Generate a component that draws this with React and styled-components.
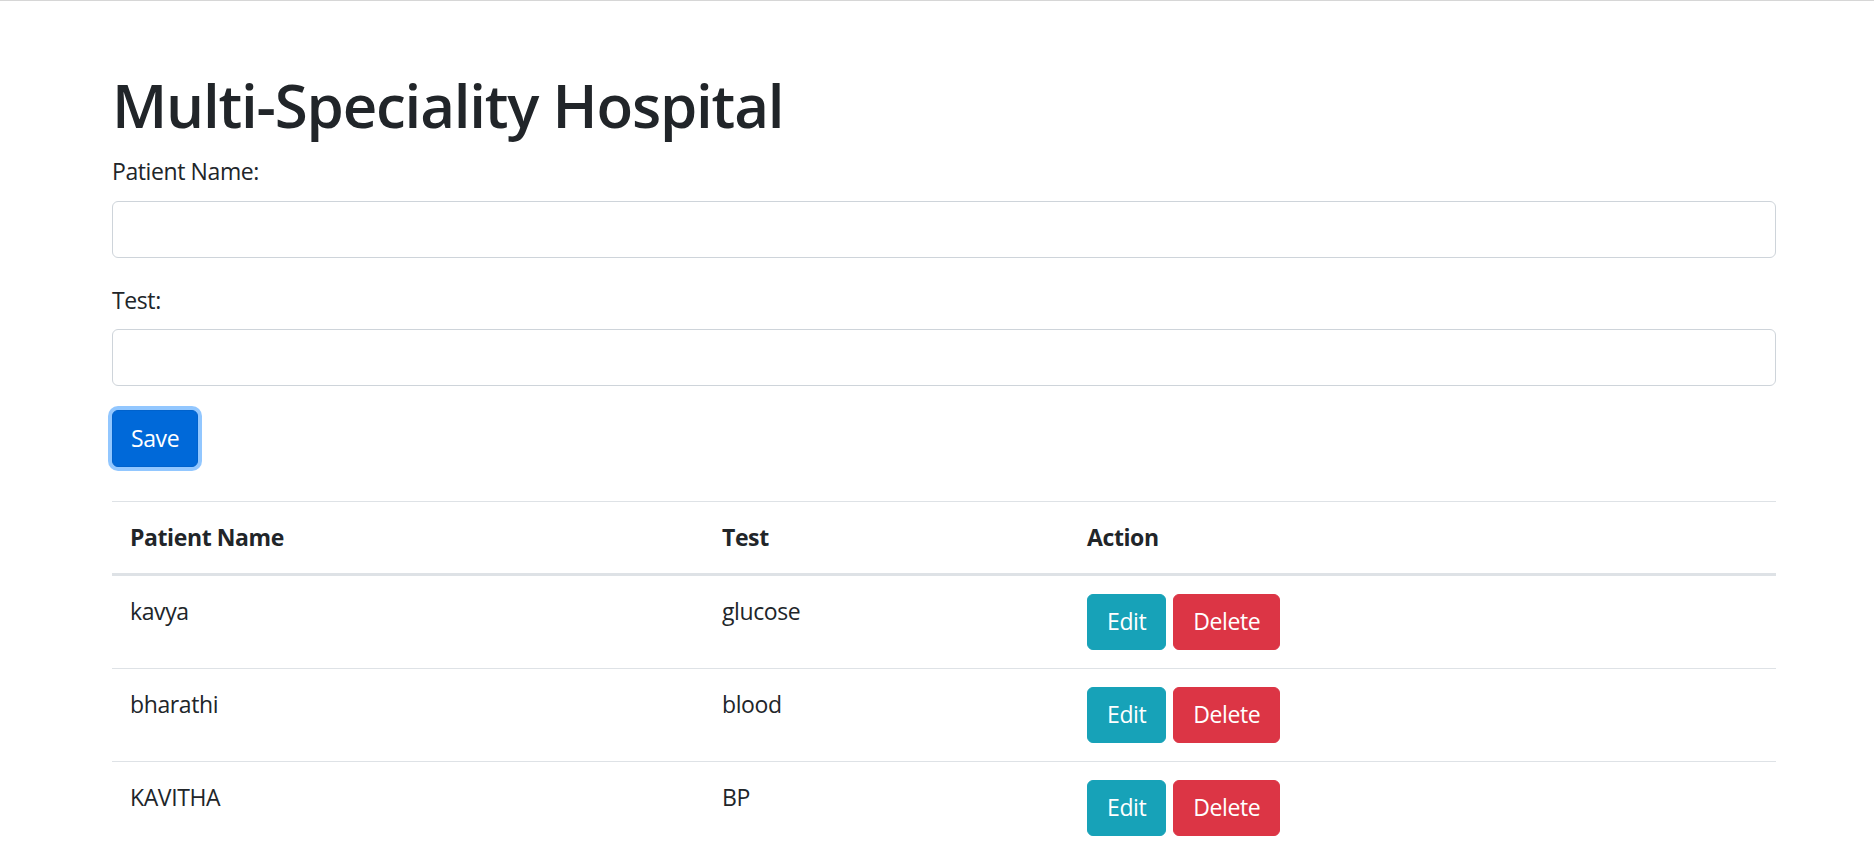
import React, { useState } from 'react';
import styled, { createGlobalStyle } from 'styled-components';

const GlobalStyle = createGlobalStyle`
  * { box-sizing: border-box; }
  html, body {
    margin: 0;
    padding: 0;
    background: #ffffff;
  }
  body {
    border-top: 1px solid #d6d6d6;
    font-family: "Open Sans", "Noto Sans", "Liberation Sans", sans-serif;
    font-size: 24px;
    line-height: 1.5;
    color: #212529;
  }
`;

const Page = styled.div`
  padding: 68px 98px 40px 112px;
`;

const Title = styled.h1`
  margin: 0 0 12px;
  font-size: 60px;
  font-weight: 600;
  line-height: 1.2;
  letter-spacing: -1.2px;
  color: #212529;
`;

const FormGroup = styled.div`
  margin-bottom: 24px;
`;

const Label = styled.label`
  display: inline-block;
  margin-bottom: 12px;
  font-size: 23px;
  letter-spacing: -0.4px;
`;

const Input = styled.input`
  display: block;
  width: 100%;
  height: 57px;
  padding: 9px 18px;
  font: inherit;
  color: #495057;
  background: #fff;
  border: 1.5px solid #ced4da;
  border-radius: 6px;
  outline: none;
`;

const SaveButton = styled.button`
  display: inline-block;
  height: 57px;
  padding: 0 18px;
  font: inherit;
  font-size: 23px;
  letter-spacing: -0.4px;
  color: #fff;
  background: #0069d9;
  border: 1.5px solid #0062cc;
  border-radius: 6px;
  box-shadow: 0 0 0 4px rgba(38, 143, 255, 0.5);
  cursor: pointer;
`;

const Table = styled.table`
  width: 100%;
  margin-top: 34px;
  border-collapse: collapse;
  color: #212529;
`;

const Th = styled.th`
  width: ${({ $width }) => $width || 'auto'};
  padding: 18px;
  text-align: left;
  vertical-align: bottom;
  font-weight: 700;
  font-size: 23px;
  letter-spacing: -0.4px;
  border-top: 1.5px solid #dee2e6;
  border-bottom: 3px solid #dee2e6;
`;

const Td = styled.td`
  padding: 18px;
  vertical-align: top;
  font-size: 23px;
  letter-spacing: -0.4px;
  border-top: 1.5px solid #dee2e6;
`;

const ActionButton = styled.button`
  height: 56px;
  padding: 0 19px;
  margin-right: 7px;
  font: inherit;
  font-size: 23px;
  letter-spacing: -0.4px;
  color: #fff;
  background: ${({ $variant }) => ($variant === 'danger' ? '#dc3545' : '#17a2b8')};
  border: 1.5px solid ${({ $variant }) => ($variant === 'danger' ? '#dc3545' : '#17a2b8')};
  border-radius: 6px;
  vertical-align: top;
  cursor: pointer;
`;

const initialPatients = [
  { id: 1, name: 'kavya', test: 'glucose' },
  { id: 2, name: 'bharathi', test: 'blood' },
  { id: 3, name: 'KAVITHA', test: 'BP' },
];

export default function App() {
  const [patients] = useState(initialPatients);
  const [name, setName] = useState('');
  const [test, setTest] = useState('');

  return (
    <Page>
      <GlobalStyle />
      <Title>Multi-Speciality Hospital</Title>

      <FormGroup>
        <Label htmlFor="patient-name">Patient Name:</Label>
        <Input id="patient-name" value={name} onChange={(e) => setName(e.target.value)} />
      </FormGroup>

      <FormGroup>
        <Label htmlFor="test">Test:</Label>
        <Input id="test" value={test} onChange={(e) => setTest(e.target.value)} />
      </FormGroup>

      <SaveButton type="button">Save</SaveButton>

      <Table>
        <thead>
          <tr>
            <Th $width="592px">Patient Name</Th>
            <Th $width="365px">Test</Th>
            <Th>Action</Th>
          </tr>
        </thead>
        <tbody>
          {patients.map((p) => (
            <tr key={p.id}>
              <Td>{p.name}</Td>
              <Td>{p.test}</Td>
              <Td>
                <ActionButton type="button">Edit</ActionButton>
                <ActionButton type="button" $variant="danger">Delete</ActionButton>
              </Td>
            </tr>
          ))}
        </tbody>
      </Table>
    </Page>
  );
}
